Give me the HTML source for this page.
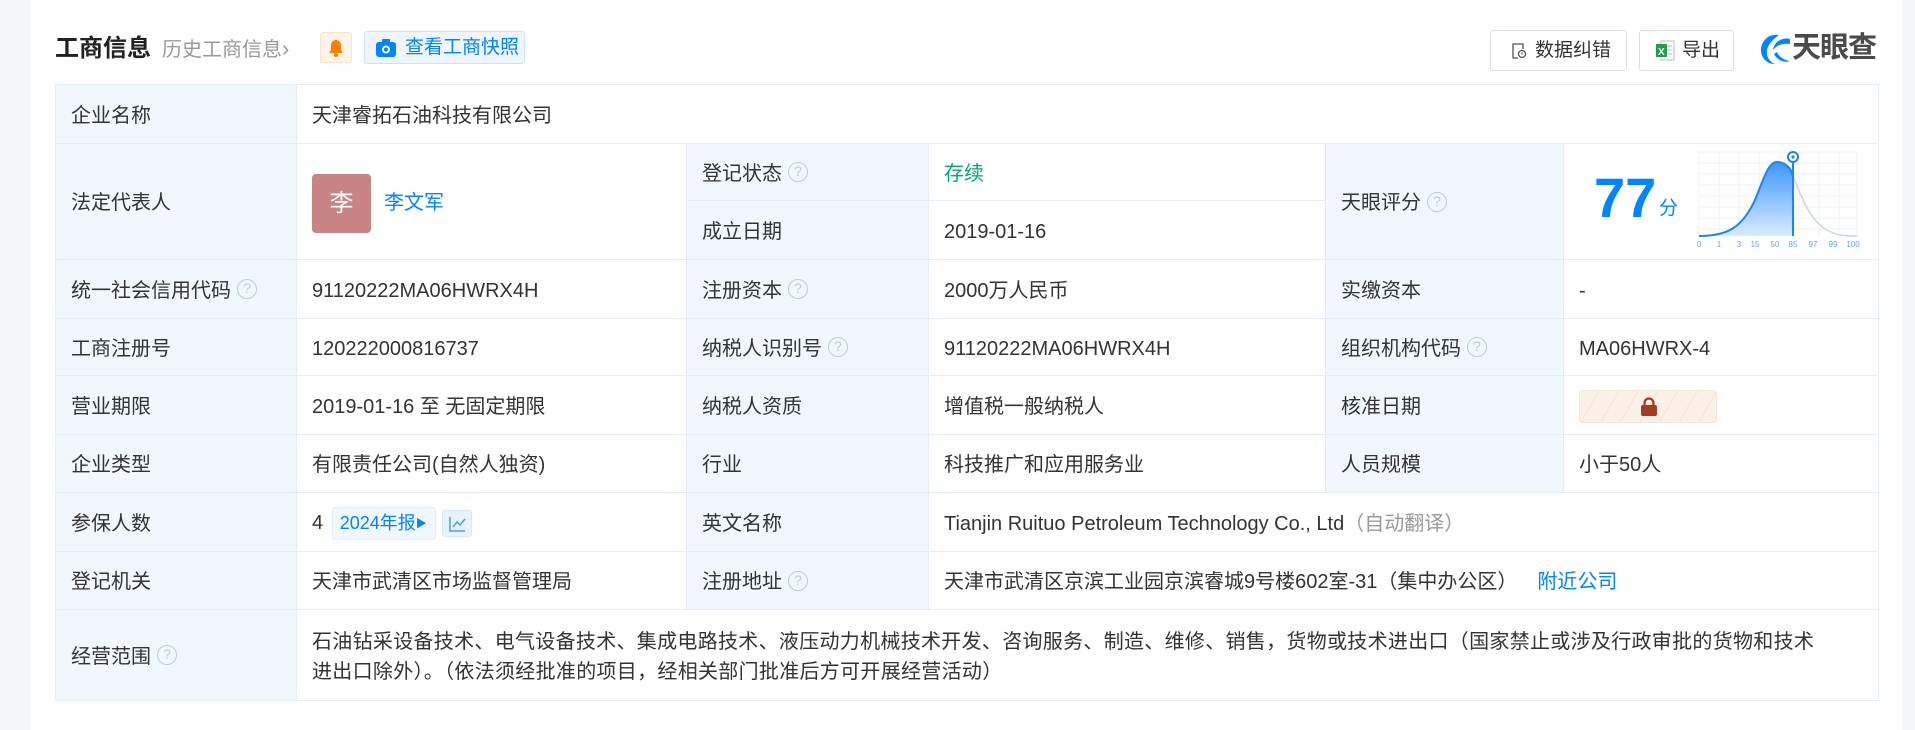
<!DOCTYPE html>
<html><head><meta charset="utf-8">
<style>
*{margin:0;padding:0;box-sizing:border-box}
body{width:1915px;height:730px;background:#f5f6f8;font-family:"Liberation Sans","Noto Sans CJK SC",sans-serif;color:#333;position:relative;overflow:hidden}
.card{position:absolute;left:30px;top:0;width:1872px;height:730px;background:#fff}
.abs{position:absolute}
table{position:absolute;left:55px;top:84px;border-collapse:collapse;table-layout:fixed;width:1823px}
td{border:1px solid #e4edf6;font-size:20px;line-height:26px;padding:3px 0 0 15px;vertical-align:middle;white-space:nowrap}
td.l{background:#f0f7fe}
.q{display:inline-block;width:20px;height:20px;border:1.5px solid #b8cde0;border-radius:50%;color:#b8cde0;font-size:14px;line-height:17px;text-align:center;vertical-align:middle;margin-left:6px;margin-top:-4px}
.blue{color:#0084ff}
.btn{position:absolute;top:30px;height:41px;border:1px solid #dcdfe6;border-radius:3px;font-size:19px;line-height:39px;background:#fff}
</style></head><body>
<div class="card"></div>
<div class="abs" style="left:55px;top:34px;font-size:24px;font-weight:bold;color:#222;line-height:30px">工商信息</div>
<div class="abs" style="left:162px;top:34px;font-size:20px;color:#999;line-height:30px">历史工商信息<span style="font-size:22px">&#8250;</span></div>
<div class="abs" style="left:320px;top:32px;width:32px;height:31px;background:#fff4e8;border:1px solid #fde3c8;border-radius:3px">
<svg width="30" height="29" viewBox="0 0 30 29"><path d="M15 7a5 5 0 0 0-5 5v5l-2 3h14l-2-3v-5a5 5 0 0 0-5-5z" fill="#ff7d00"/><circle cx="15" cy="22" r="2" fill="#ff7d00"/></svg></div>
<div class="abs" style="left:364px;top:31px;width:161px;height:33px;background:#eef5ff;border:1px solid #cde2fc;border-radius:3px;font-size:19px;color:#0084ff;line-height:31px;padding-left:40px">查看工商快照
<svg class="abs" style="left:11px;top:7px" width="20" height="18" viewBox="0 0 20 18"><rect x="0" y="3" width="20" height="15" rx="3" fill="#0084ff"/><rect x="6" y="0" width="8" height="5" rx="1" fill="#0084ff"/><circle cx="10" cy="10.5" r="4" fill="#fff"/><circle cx="10" cy="10.5" r="2" fill="#0084ff"/></svg></div>

<div class="btn" style="left:1490px;width:137px;padding-left:44px">数据纠错
<svg class="abs" style="left:21px;top:12px" width="14" height="16" viewBox="0 0 14 16"><path d="M11 6V1H1v14h5" fill="none" stroke="#555" stroke-width="1.3"/><circle cx="10" cy="11" r="3.5" fill="none" stroke="#555" stroke-width="1.3"/><path d="M10 9.5v2" stroke="#555" stroke-width="1.3"/></svg></div>
<div class="btn" style="left:1639px;width:95px;padding-left:42px">导出
<svg class="abs" style="left:15px;top:9px" width="22" height="22" viewBox="0 0 22 22"><rect x="6" y="1" width="13" height="19" fill="#fff" stroke="#bbb"/><path d="M10 6h7M10 10h7M10 14h7" stroke="#bbb"/><rect x="1" y="4" width="11" height="13" fill="#1f9f4a"/><text x="3" y="15" font-size="10" fill="#fff" font-weight="bold" font-family="Liberation Sans">X</text></svg></div>
<svg class="abs" style="left:1759px;top:33px" width="33" height="32" viewBox="0 0 33 32"><path d="M20 2C10 0 2 8 2 17c0 8 6 14 14 14-7-3-10-10-7-17 2-5 7-9 11-12z" fill="#0084ff"/><path d="M31 6c-8-2-16 3-17 11 4-5 10-7 17-6zM15 21c3 6 10 9 16 7-6-1-11-4-13-9z" fill="#0084ff"/></svg>
<div class="abs" style="left:1792px;top:30px;font-size:29px;font-weight:bold;color:#4a4a4a;line-height:36px;letter-spacing:-1px">天眼查</div>

<table>
<colgroup><col style="width:241px"><col style="width:390px"><col style="width:242px"><col style="width:397px"><col style="width:238px"><col style="width:315px"></colgroup>
<tr style="height:59px"><td class="l">企业名称</td><td colspan="5">天津睿拓石油科技有限公司</td></tr>
<tr style="height:57px"><td class="l" rowspan="2">法定代表人</td><td rowspan="2"><div style="display:inline-block;width:59px;height:59px;background:#c98383;border-radius:4px;color:#fff;font-size:24px;text-align:center;line-height:59px;vertical-align:middle">李</div><span class="blue" style="margin-left:13px;vertical-align:middle">李文军</span></td><td class="l">登记状态<span class="q">?</span></td><td style="color:#00a870">存续</td><td class="l" rowspan="2">天眼评分<span class="q">?</span></td><td rowspan="2" style="position:relative;padding:0">
<div class="abs" style="left:30px;top:22px;font-size:56px;font-weight:bold;color:#0084ff;line-height:64px">77</div>
<div class="abs" style="left:95px;top:52px;font-size:19px;color:#0084ff">分</div>
<svg class="abs" style="left:133px;top:6px" width="165" height="100" viewBox="0 0 165 100">
<defs><linearGradient id="g" x1="0" y1="0" x2="0" y2="1"><stop offset="0" stop-color="#3d97ff"/><stop offset="1" stop-color="#d9ebff"/></linearGradient></defs>
<g stroke="#edf2f8" stroke-width="1"><path d="M2 2v84M22 2v84M42 2v84M62 2v84M82 2v84M102 2v84M122 2v84M142 2v84M160 2v84M2 2h158M2 13h158M2 24h158M2 35h158M2 46h158M2 57h158M2 68h158M2 79h158"/></g>
<path d="M2 86C30 86 45 78 58 50C68 25 72 12 80 12C88 12 94 18 96 26L96 86Z" fill="url(#g)"/>
<path d="M2 86C30 86 45 78 58 50C68 25 72 12 80 12C88 12 94 18 96 26" fill="none" stroke="#1a84f5" stroke-width="2"/>
<path d="M96 26C104 45 112 70 130 80C140 86 150 86 160 86" fill="none" stroke="#c8d6e6" stroke-width="1.5"/>
<path d="M96 8V86" stroke="#1a84f5" stroke-width="2"/>
<circle cx="96" cy="7" r="5" fill="#fff" stroke="#1a84f5" stroke-width="2"/><circle cx="96" cy="7" r="1.6" fill="#1a84f5"/>
<g font-size="8" fill="#5ba6f5" font-family="Liberation Sans" text-anchor="middle"><text x="2" y="97">0</text><text x="22" y="97">1</text><text x="42" y="97">3</text><text x="58" y="97">15</text><text x="78" y="97">50</text><text x="96" y="97">85</text><text x="116" y="97">97</text><text x="136" y="97">99</text><text x="156" y="97">100</text></g>
</svg></td></tr>
<tr style="height:59px"><td class="l">成立日期</td><td>2019-01-16</td></tr>
<tr style="height:59px"><td class="l">统一社会信用代码<span class="q">?</span></td><td>91120222MA06HWRX4H</td><td class="l">注册资本<span class="q">?</span></td><td>2000万人民币</td><td class="l">实缴资本</td><td>-</td></tr>
<tr style="height:57px"><td class="l">工商注册号</td><td>120222000816737</td><td class="l">纳税人识别号<span class="q">?</span></td><td>91120222MA06HWRX4H</td><td class="l">组织机构代码<span class="q">?</span></td><td>MA06HWRX-4</td></tr>
<tr style="height:59px"><td class="l">营业期限</td><td>2019-01-16 至 无固定期限</td><td class="l">纳税人资质</td><td>增值税一般纳税人</td><td class="l">核准日期</td><td><div style="width:138px;height:33px;border-radius:3px;background:repeating-linear-gradient(120deg,#fbf0e6 0 16px,#f3e3d5 16px 17px);border:1px solid #f6e6d8;position:relative"><svg class="abs" style="left:60px;top:6px" width="18" height="20" viewBox="0 0 18 20"><path d="M4.5 9V6a4.5 4.5 0 0 1 9 0v3" fill="none" stroke="#a53a1e" stroke-width="2.2"/><rect x="1" y="8" width="16" height="11" rx="2" fill="#a53a1e"/></svg></div></td></tr>
<tr style="height:58px"><td class="l">企业类型</td><td>有限责任公司(自然人独资)</td><td class="l">行业</td><td>科技推广和应用服务业</td><td class="l">人员规模</td><td>小于50人</td></tr>
<tr style="height:59px"><td class="l">参保人数</td><td>4 <span style="display:inline-block;background:#f0f7ff;border:1px solid #e2eefc;border-radius:3px;color:#0084ff;font-size:18px;padding:0 8px 0 7px;line-height:30px;margin-left:3px;vertical-align:middle">2024年报<span style="font-size:11px;vertical-align:2px">&#9654;</span></span><span style="display:inline-block;width:30px;height:27px;background:#e8f2fe;border:1px solid #d5e7fc;border-radius:3px;vertical-align:middle;margin-left:6px;position:relative"><svg class="abs" style="left:6px;top:5px" width="17" height="16" viewBox="0 0 17 16"><path d="M1 1v14h15" fill="none" stroke="#4c9bf0" stroke-width="1.5"/><path d="M4 11l4-5 3 3 5-6" fill="none" stroke="#4c9bf0" stroke-width="1.5"/></svg></span></td><td class="l">英文名称</td><td colspan="3">Tianjin Ruituo Petroleum Technology Co., Ltd<span style="color:#999">（自动翻译）</span></td></tr>
<tr style="height:58px"><td class="l">登记机关</td><td>天津市武清区市场监督管理局</td><td class="l">注册地址<span class="q">?</span></td><td colspan="3">天津市武清区京滨工业园京滨睿城9号楼602室-31（集中办公区）<span class="blue" style="margin-left:20px">附近公司</span></td></tr>
<tr style="height:91px"><td class="l">经营范围<span class="q">?</span></td><td colspan="5" style="white-space:normal;line-height:30px;padding-right:60px;letter-spacing:0.3px">石油钻采设备技术、电气设备技术、集成电路技术、液压动力机械技术开发、咨询服务、制造、维修、销售，货物或技术进出口（国家禁止或涉及行政审批的货物和技术进出口除外）。（依法须经批准的项目，经相关部门批准后方可开展经营活动）</td></tr>
</table>
</body></html>
